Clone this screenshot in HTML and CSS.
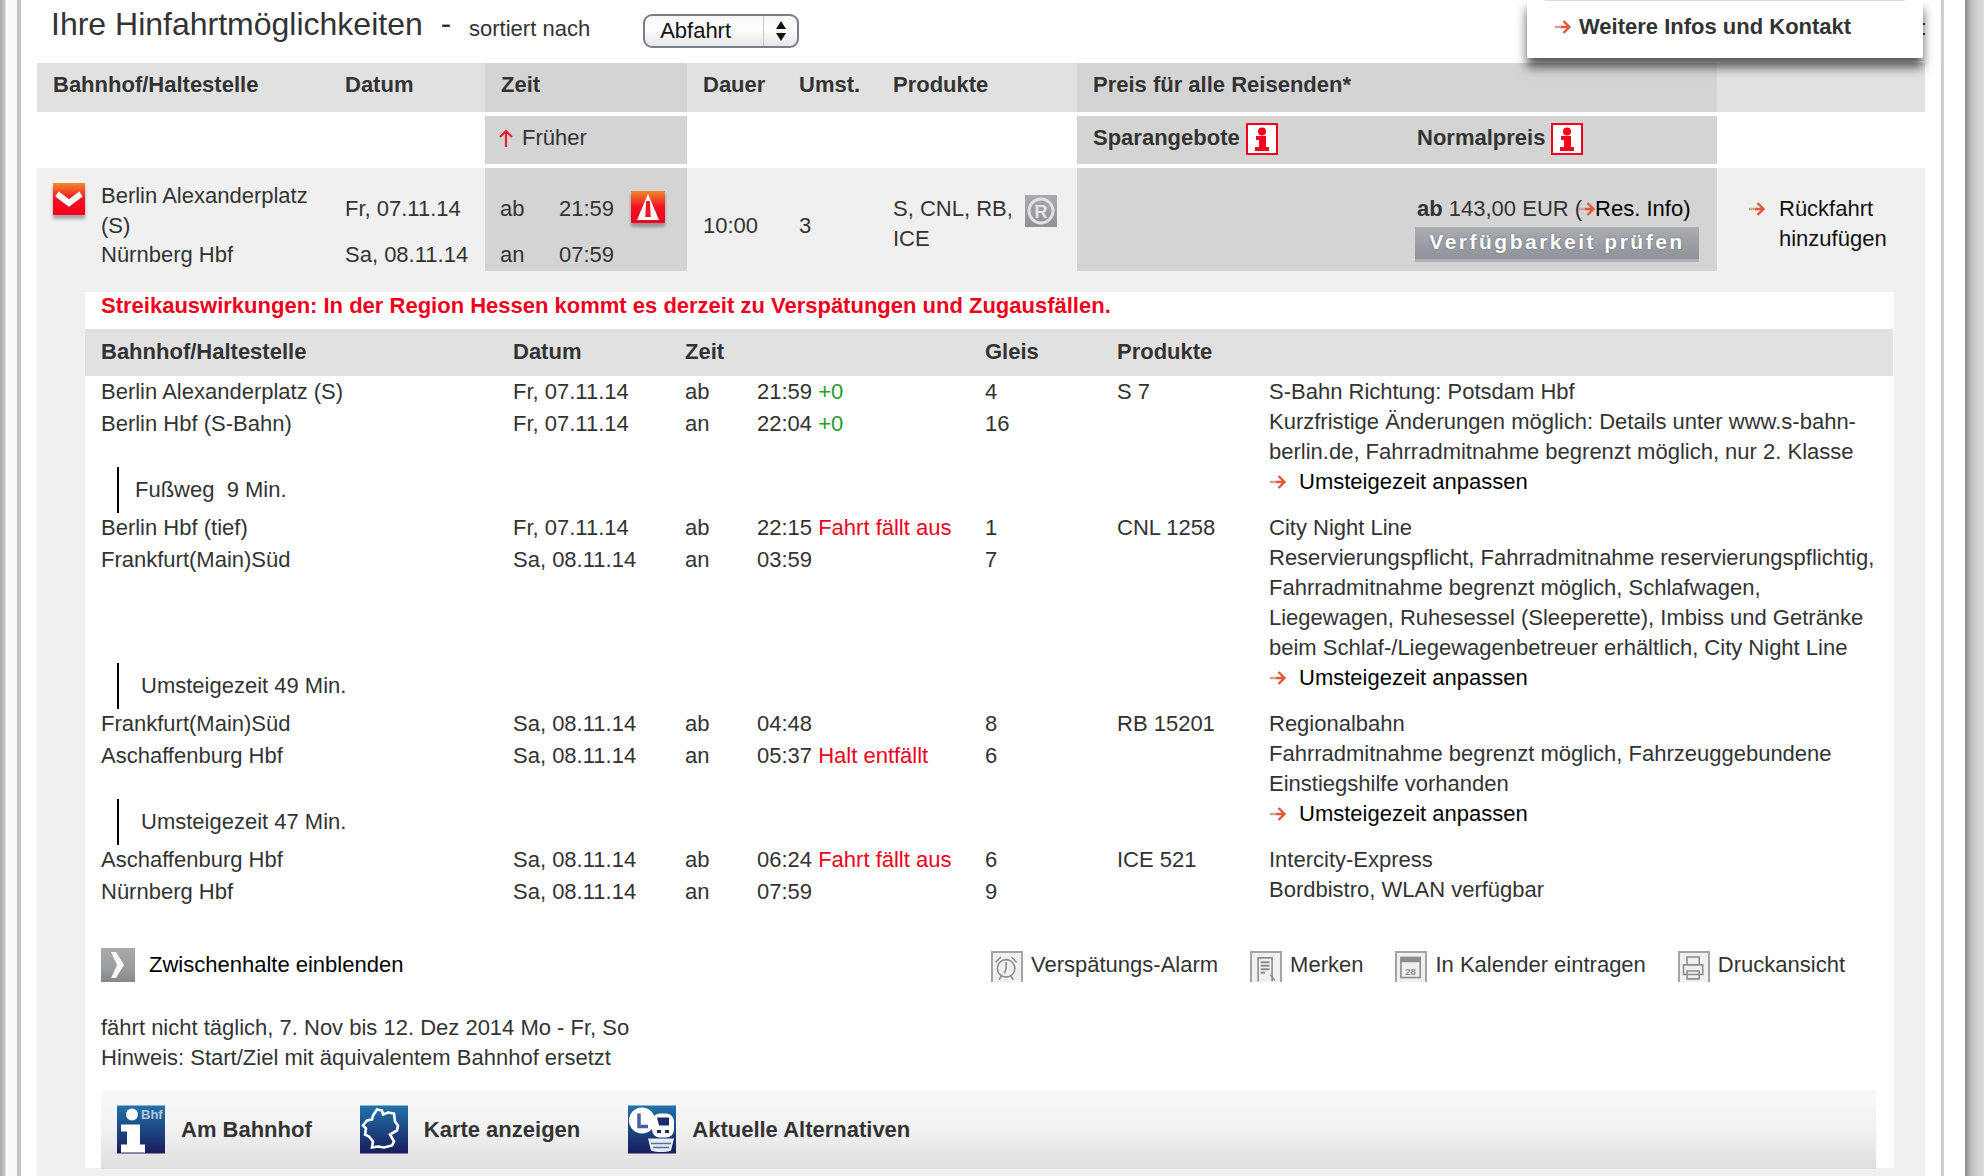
FILE: index.html
```html
<!DOCTYPE html>
<html lang="de">
<head>
    <meta charset="UTF-8">
    <meta name="viewport" content="width=device-width, initial-scale=1.0">
    <title>Ihre Hinfahrtmöglichkeiten</title>
    <link rel="stylesheet" href="styles.css">
</head>
<body>
    <svg class="sprite" width="0" height="0">
        <defs>
            <symbol id="arrow" viewBox="0 0 18 18">
                <path d="M1 9h7" stroke="#d9a090" stroke-width="2.4" fill="none"/>
                <path d="M7 9h8M9.500 3l6 6-6 6" stroke="#e2583a" stroke-width="2.4" fill="none"/>
            </symbol>
            <symbol id="info" viewBox="0 0 32 32">
                <rect x="1" y="1" width="30" height="30" fill="#fff" stroke="#f5001e" stroke-width="2"/>
                <circle cx="16" cy="8.500" r="4" fill="#f5001e"/>
                <path d="M10 13h10v11h3v4H9v-4h4v-7h-3z" fill="#f5001e"/>
            </symbol>
            <linearGradient id="bhfblue" x1="0" y1="0" x2="0" y2="1">
                <stop offset="0" stop-color="#2272aa"/>
                <stop offset="1" stop-color="#191c5c"/>
            </linearGradient>
        </defs>
    </svg>

    <div class="edge-left"></div>

    <main class="page">
        <div class="menu">
            <a class="menu-link"><svg class="arrow"><use href="#arrow"/></svg>Weitere Infos und Kontakt</a>
        </div>
        <span class="menu-dots"></span>

        <div class="title-bar">
            <h1>Ihre Hinfahrtmöglichkeiten</h1>
            <span class="title-dash">-</span>
            <span class="sort-label">sortiert nach</span>
            <div class="select">
                <span class="select-value">Abfahrt</span>
                <span class="select-arrows">
                    <svg width="12" height="24" viewBox="0 0 12 24"><path d="M6 2l5 8H1zM6 22l5-8H1z" fill="#111"/></svg>
                </span>
            </div>
        </div>

        <div class="conn-row conn-head">
            <div class="cell">Bahnhof/Haltestelle</div>
            <div class="cell">Datum</div>
            <div class="cell shade">Zeit</div>
            <div class="cell">Dauer</div>
            <div class="cell">Umst.</div>
            <div class="cell">Produkte</div>
            <div class="cell shade">Preis für alle Reisenden*</div>
            <div class="cell"></div>
        </div>

        <div class="conn-row conn-sub">
            <a class="cell shade col-zeit earlier">
                <svg width="16" height="20" viewBox="0 0 16 20"><path d="M8 19V3M2 9l6-6 6 6" stroke="#ee1c34" stroke-width="2.200" fill="none"/></svg>
                Früher
            </a>
            <div class="cell shade col-price price-types">
                <span class="price-type">Sparangebote <svg class="info-icon"><use href="#info"/></svg></span>
                <span class="price-type">Normalpreis <svg class="info-icon"><use href="#info"/></svg></span>
            </div>
        </div>

        <div class="conn-row conn-main">
            <div class="stations">
                <div class="red-icon">
                    <svg width="32" height="32" viewBox="0 0 32 32"><path d="M4 11l12 9 12-9" stroke="#fff" stroke-width="6" fill="none"/></svg>
                </div>
                <div class="station-names">
                    <div>Berlin Alexanderplatz (S)</div>
                    <div>Nürnberg Hbf</div>
                </div>
            </div>
            <div class="dates">
                <div>Fr, 07.11.14</div>
                <div>Sa, 08.11.14</div>
            </div>
            <div class="times shade">
                <div class="time-line">
                    <span class="time-kind">ab</span><span class="time-val">21:59</span>
                    <div class="red-icon warn-icon">
                        <svg width="34" height="32" viewBox="0 0 34 32"><path d="M17 3L6 29h22z" fill="#fff"/><path d="M15.200 10h3.600l1 16h-5.600z" fill="#f01828"/></svg>
                    </div>
                </div>
                <div class="time-line">
                    <span class="time-kind">an</span><span class="time-val">07:59</span>
                </div>
            </div>
            <div class="duration">10:00</div>
            <div class="duration">3</div>
            <div class="products">
                <span>S, CNL, RB, ICE</span>
                <div class="res-icon">
                    <svg width="32" height="32" viewBox="0 0 32 32">
                        <circle cx="16" cy="16" r="12" fill="none" stroke="#dfe0e2" stroke-width="3"/>
                        <text x="16" y="23" text-anchor="middle" class="res-letter">R</text>
                    </svg>
                </div>
            </div>
            <div class="price shade">
                <div class="price-box">
                    <div class="price-text"><b>ab</b> 143,00 EUR (<svg class="arrow arrow-inline"><use href="#arrow"/></svg><a class="black">Res. Info)</a></div>
                    <a class="check-btn">Verfügbarkeit prüfen</a>
                </div>
            </div>
            <a class="return-link"><svg class="arrow"><use href="#arrow"/></svg><span>Rückfahrt hinzufügen</span></a>
        </div>

        <section class="details-wrap">
            <div class="details">
                <p class="strike">Streikauswirkungen: In der Region Hessen kommt es derzeit zu Verspätungen und Zugausfällen.</p>

                <div class="leg leg-head">
                    <span>Bahnhof/Haltestelle</span><span>Datum</span><span class="span-zeit">Zeit</span><span>Gleis</span><span>Produkte</span>
                </div>

                <div class="leg">
                    <span>Berlin Alexanderplatz (S)</span><span>Fr, 07.11.14</span><span>ab</span><span>21:59 <em class="ok">+0</em></span><span>4</span><span>S 7</span>
                    <div class="info">
                        S-Bahn Richtung: Potsdam Hbf<br>
                        Kurzfristige Änderungen möglich: Details unter www.s-bahn-berlin.de, Fahrradmitnahme begrenzt möglich, nur 2. Klasse
                        <a class="change-link"><svg class="arrow"><use href="#arrow"/></svg>Umsteigezeit anpassen</a>
                    </div>
                    <span>Berlin Hbf (S-Bahn)</span><span>Fr, 07.11.14</span><span>an</span><span>22:04 <em class="ok">+0</em></span><span>16</span><span></span>
                    <div class="transfer walk">Fußweg&nbsp; 9 Min.</div>
                </div>

                <div class="leg">
                    <span>Berlin Hbf (tief)</span><span>Fr, 07.11.14</span><span>ab</span><span>22:15 <em class="bad">Fahrt fällt aus</em></span><span>1</span><span>CNL 1258</span>
                    <div class="info">
                        City Night Line<br>
                        Reservierungspflicht, Fahrradmitnahme reservierungspflichtig, Fahrradmitnahme begrenzt möglich, Schlafwagen, Liegewagen, Ruhesessel (Sleeperette), Imbiss und Getränke beim Schlaf-/Liegewagenbetreuer erhältlich, City Night Line
                        <a class="change-link"><svg class="arrow"><use href="#arrow"/></svg>Umsteigezeit anpassen</a>
                    </div>
                    <span>Frankfurt(Main)Süd</span><span>Sa, 08.11.14</span><span>an</span><span>03:59</span><span>7</span><span></span>
                    <div class="transfer">Umsteigezeit 49 Min.</div>
                </div>

                <div class="leg">
                    <span>Frankfurt(Main)Süd</span><span>Sa, 08.11.14</span><span>ab</span><span>04:48</span><span>8</span><span>RB 15201</span>
                    <div class="info">
                        Regionalbahn<br>
                        Fahrradmitnahme begrenzt möglich, Fahrzeuggebundene Einstiegshilfe vorhanden
                        <a class="change-link"><svg class="arrow"><use href="#arrow"/></svg>Umsteigezeit anpassen</a>
                    </div>
                    <span>Aschaffenburg Hbf</span><span>Sa, 08.11.14</span><span>an</span><span>05:37 <em class="bad">Halt entfällt</em></span><span>6</span><span></span>
                    <div class="transfer">Umsteigezeit 47 Min.</div>
                </div>

                <div class="leg leg-last">
                    <span>Aschaffenburg Hbf</span><span>Sa, 08.11.14</span><span>ab</span><span>06:24 <em class="bad">Fahrt fällt aus</em></span><span>6</span><span>ICE 521</span>
                    <div class="info">
                        Intercity-Express<br>
                        Bordbistro, WLAN verfügbar
                    </div>
                    <span>Nürnberg Hbf</span><span>Sa, 08.11.14</span><span>an</span><span>07:59</span><span>9</span><span></span>
                </div>

                <div class="actions">
                    <a class="stops-link">
                        <span class="gray-chevron">
                            <svg width="34" height="34" viewBox="0 0 34 34"><path d="M10 4h5l8 13-8 13h-5l6-13z" fill="#fff" opacity=".92"/></svg>
                        </span>
                        Zwischenhalte einblenden
                    </a>
                    <div class="tools">
                        <a class="tool">
                            <svg class="tool-icon" viewBox="0 0 32 32">
                                <circle cx="15" cy="17" r="10" class="tool-line"/>
                                <path d="M15 10v7l-2 6M3 10l6-6M27 10l-6-6M7 30l3-5M23 30l-3-5" class="tool-line"/>
                            </svg>
                            Verspätungs-Alarm
                        </a>
                        <a class="tool">
                            <svg class="tool-icon" viewBox="0 0 32 32">
                                <path d="M7 32V5h16v27" class="tool-line"/>
                                <path d="M10 10h10M10 14h10M10 18h10M10 22h5" class="tool-line tool-bold"/>
                                <path d="M21 24l5 7" class="tool-line"/>
                            </svg>
                            Merken
                        </a>
                        <a class="tool">
                            <svg class="tool-icon" viewBox="0 0 32 32">
                                <rect x="4" y="4" width="23" height="6" fill="#8c8c8c"/>
                                <rect x="4.500" y="4.500" width="22" height="23" class="tool-line"/>
                                <text x="15.500" y="24" text-anchor="middle" class="tool-date">28</text>
                            </svg>
                            In Kalender eintragen
                        </a>
                        <a class="tool">
                            <svg class="tool-icon" viewBox="0 0 32 32">
                                <path d="M8 13V4h14v9M4 13h22v11H4zM8 20h14v9H8z" class="tool-line"/>
                            </svg>
                            Druckansicht
                        </a>
                    </div>
                </div>

                <div class="notes">
                    fährt nicht täglich, 7. Nov bis 12. Dez 2014 Mo - Fr, So<br>
                    Hinweis: Start/Ziel mit äquivalentem Bahnhof ersetzt
                </div>

                <div class="service-bar">
                    <a class="service">
                        <svg class="service-icon" viewBox="0 0 48 48">
                            <rect width="48" height="48" fill="url(#bhfblue)"/>
                            <circle cx="15" cy="9" r="6" fill="#fff"/>
                            <path d="M4 19h19v20h5v8H4v-8h6V26H4z" fill="#fff"/>
                            <text x="24" y="13" class="bhf-text">Bhf</text>
                        </svg>
                        Am Bahnhof
                    </a>
                    <a class="service">
                        <svg class="service-icon" viewBox="0 0 48 48">
                            <rect width="48" height="48" fill="url(#bhfblue)"/>
                            <path d="M17 4l5 1 1 4 5-2 6 1 1 8 3 4-1 5-7 4 4 7-2 4-8 2-6-1-6 1 1-6-4-5-4-2 1-6-3-3 4-5 5-1 1-4z" fill="none" stroke="#fff" stroke-width="2.600"/>
                        </svg>
                        Karte anzeigen
                    </a>
                    <a class="service">
                        <svg class="service-icon" viewBox="0 0 48 48">
                            <rect width="48" height="48" fill="url(#bhfblue)"/>
                            <path d="M20 33h26l-3 12c-5 2-15 2-20 0z" fill="#fff" opacity=".9"/>
                            <path d="M23 38h20M25 42h16" stroke="#5570a8" stroke-width="1.500"/>
                            <ellipse cx="14" cy="15" rx="13" ry="13" fill="#fff"/>
                            <rect x="24" y="8" width="22" height="24" rx="8" fill="#fff"/>
                            <path d="M11 8v13h9" stroke="#4a5fa0" stroke-width="3.500" fill="none"/>
                            <path d="M29 12h12v8H31z" fill="#1c2a70"/>
                            <path d="M29 26h4M37 26h4" stroke="#1c2a70" stroke-width="3"/>
                        </svg>
                        Aktuelle Alternativen
                    </a>
                </div>
            </div>
        </section>
    </main>

    <div class="edge-right"></div>
</body>
</html>
```

FILE: styles.css
```css
html, body {
    height: 100%;
    margin: 0;
}
body {
    display: flex;
    overflow: hidden;
    font-family: "Liberation Sans", Arial, sans-serif;
    font-size: 22px;
    line-height: 30px;
    color: #333;
    background: #fff;
}
a {
    color: inherit;
}
em {
    font-style: normal;
}
.sprite {
    position: absolute;
}

/* window edges */
.edge-left {
    width: 21px;
    flex: none;
    box-sizing: border-box;
    border-right: 4px solid #c4c4c4;
    background: linear-gradient(to right, #a8a8a8 0, #c8c8c8 5px, #fafafa 6px);
}
.edge-right {
    width: 43px;
    flex: none;
    box-sizing: border-box;
    border-left: 3px solid #cfcfcf;
    background: linear-gradient(to right, #fff 0, #fff 21px, #8c8c8c 21px, #c4c4c4 28px, #dcdcdc 100%);
}
.page {
    position: relative;
    flex: 1;
    min-width: 0;
    padding: 0 16px;
}

/* floating menu */
.menu {
    position: absolute;
    top: 0;
    left: 1506px;
    width: 396px;
    height: 58px;
    background: #fff;
    box-shadow: 0 9px 10px rgba(0, 0, 0, 0.65);
    z-index: 2;
}
.menu::before {
    content: "";
    display: block;
    height: 1px;
    margin: 0 18px;
    background: #ddd;
}
.menu-link {
    display: flex;
    align-items: center;
    gap: 7px;
    margin: 11px 0 0 27px;
    font-weight: bold;
}
.menu-dots {
    position: absolute;
    top: 23px;
    left: 1902px;
    width: 2px;
    height: 2px;
    background: #334;
    box-shadow: 0 10px 0 #334;
}
.arrow {
    width: 18px;
    height: 18px;
    flex: none;
}

/* title */
.title-bar {
    display: flex;
    align-items: center;
    height: 63px;
    padding: 0 0 16px 14px;
    box-sizing: border-box;
    color: #333;
}
.title-bar h1 {
    margin: 0;
    font-size: 32px;
    font-weight: normal;
}
.title-dash {
    margin-left: 18px;
    font-size: 31px;
}
.sort-label {
    margin: 11px 0 0 18px;
}
.select {
    display: flex;
    align-items: center;
    width: 156px;
    height: 34px;
    flex: none;
    box-sizing: border-box;
    margin: 14px 0 0 53px;
    border: 2px solid #75808c;
    border-radius: 9px;
    color: #111;
    background: linear-gradient(#f6f6f6, #fff 40%, #e6e6e6);
}
.select-value {
    flex: 1;
    padding-left: 15px;
}
.select-arrows {
    display: flex;
    justify-content: center;
    align-items: center;
    width: 33px;
    height: 100%;
    border-left: 1px solid #c8c8c8;
}

/* connection table */
.conn-row {
    display: grid;
    grid-template-columns: 292px 156px 202px 96px 94px 200px 640px 208px;
}
.conn-head {
    height: 49px;
    background: #e1e1e1;
    font-weight: bold;
}
.cell {
    display: flex;
    align-items: center;
    padding: 0 0 5px 16px;
}
.shade {
    background: #d4d4d4;
}
.conn-sub {
    height: 48px;
    margin: 4px 0;
    font-weight: bold;
}
.col-zeit {
    grid-column: 3;
}
.col-price {
    grid-column: 7;
}
.earlier {
    gap: 8px;
    padding-left: 13px;
    font-weight: normal;
}
.price-types {
    display: grid;
    grid-template-columns: 324px 1fr;
}
.price-type {
    display: flex;
    align-items: center;
    gap: 6px;
}
.info-icon {
    width: 32px;
    height: 32px;
    margin-top: 3px;
}
.conn-main {
    height: 103px;
    grid-template-rows: 103px;
    background: #f0f0f0;
}
.stations {
    display: flex;
    padding: 15px 0 0 16px;
}
.red-icon {
    width: 32px;
    height: 32px;
    flex: none;
    background: linear-gradient(#ef8a2c, #f5101f 50%, #f50020);
    box-shadow: 0 4px 3px rgba(0, 0, 0, 0.3);
}
.station-names {
    width: 225px;
    margin: -2px 0 0 16px;
    line-height: 29.5px;
}
.dates {
    padding: 26px 0 0 16px;
    white-space: nowrap;
}
.dates div + div {
    margin-top: 16px;
}
.times {
    padding: 26px 0 0 15px;
}
.time-line {
    display: flex;
    margin-bottom: 16px;
}
.time-kind {
    width: 59px;
}
.time-val {
    width: 72px;
}
.warn-icon {
    width: 34px;
    margin-top: -3px;
}
.duration {
    padding: 43px 0 0 16px;
}
.products {
    display: flex;
    padding: 26px 0 0 16px;
}
.products span {
    width: 132px;
}
.res-icon {
    width: 32px;
    height: 32px;
    margin-top: 1px;
    background: linear-gradient(#a9abae, #8d9096);
}
.res-letter {
    font-size: 18px;
    font-weight: bold;
    fill: #e4e5e7;
}
.price {
    padding: 26px 0 0 338px;
}
.price-box {
    width: 284px;
}
.price-text {
    height: 33px;
    margin-left: 2px;
    white-space: nowrap;
}
.arrow-inline {
    margin: 0 -1px -2px -4px;
}
.black {
    color: #000;
}
.check-btn {
    display: block;
    height: 32px;
    border-bottom: 3px solid #b0b0b2;
    background: linear-gradient(#abadb1, #8f929a);
    color: #fff;
    font-weight: bold;
    font-size: 21px;
    line-height: 29px;
    letter-spacing: 2.5px;
    text-align: center;
    text-shadow: 0 0 2px rgba(60, 60, 70, 0.6);
}
.return-link {
    display: flex;
    padding: 26px 0 0 31px;
}
.return-link .arrow {
    margin: 6px 13px 0 0;
}
.return-link span {
    width: 130px;
    color: #111;
}

/* details */
.details-wrap {
    height: 905px;
    padding: 21px 31px 0 48px;
    background: #f0f0f0;
}
.details {
    height: 876px;
    background: #fff;
}
.strike {
    height: 37px;
    margin: 0;
    padding-left: 16px;
    line-height: 28px;
    color: #f0001c;
    font-weight: bold;
}
.leg {
    display: grid;
    grid-template-columns: 412px 172px 72px 228px 132px 152px 1fr;
    grid-template-rows: 32px 32px 1fr;
    padding-left: 16px;
    white-space: nowrap;
}
.leg-head {
    grid-template-rows: 45px;
    align-items: center;
    margin: 0 1px 1px 0;
    padding-bottom: 2px;
    background: #e1e1e1;
    font-weight: bold;
}
.span-zeit {
    grid-column: span 2;
}
.info {
    grid-column: 7;
    grid-row: 1 / 4;
    padding: 0 12px 16px 0;
    white-space: normal;
}
.change-link {
    display: flex;
    align-items: center;
    gap: 12px;
    color: #000;
}
.ok {
    color: #2a9a2a;
}
.bad {
    color: #f0001c;
}
.transfer {
    grid-column: 1 / 7;
    grid-row: 3;
    align-self: end;
    display: flex;
    align-items: center;
    height: 46px;
    box-sizing: border-box;
    margin-left: 16px;
    padding-left: 22px;
    border-left: 2px solid #000;
}
.walk {
    padding-left: 16px;
}
.leg-last {
    grid-template-rows: 32px 32px;
}
.leg-last .info {
    grid-row: 1 / 3;
    padding-bottom: 0;
}

/* actions and notes */
.actions {
    display: flex;
    justify-content: space-between;
    margin-top: 39px;
    padding: 0 49px 0 16px;
    height: 34px;
    line-height: 34px;
}
.stops-link {
    display: flex;
    gap: 14px;
    color: #000;
}
.gray-chevron {
    display: block;
    width: 34px;
    height: 34px;
    background: linear-gradient(#a8aaac, #9a9c9f 60%, #85888c);
}
.tools {
    display: flex;
    gap: 32px;
}
.tool {
    display: flex;
    align-items: center;
    gap: 8px;
}
.tool-icon {
    width: 32px;
    height: 31px;
    margin-top: 2px;
    box-sizing: border-box;
    border: solid #a4a4a4;
    border-width: 2px 2px 0;
    background: #f0f0f0;
}
.tool-line {
    fill: none;
    stroke: #8c8c8c;
    stroke-width: 1.800;
}
.tool-bold {
    stroke-width: 2.500;
}
.tool-date {
    font-size: 11px;
    font-weight: bold;
    fill: #8c8c8c;
}
.notes {
    margin-top: 31px;
    padding-left: 16px;
}
.service-bar {
    display: flex;
    gap: 48px;
    height: 79px;
    box-sizing: border-box;
    margin: 17px 18px 0 16px;
    padding: 15px 0 0 16px;
    background: linear-gradient(#f9f9f9, #f1f1f1 50%, #dfdfdf);
    font-weight: bold;
}
.service {
    display: flex;
    align-items: center;
    gap: 16px;
    height: 49px;
}
.service-icon {
    width: 48px;
    height: 49px;
}
.bhf-text {
    font-size: 13px;
    font-weight: bold;
    fill: #b8c4dc;
}
```
